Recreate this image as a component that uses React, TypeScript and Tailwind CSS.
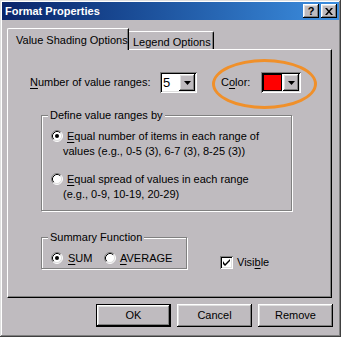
import React from "react";

const raised =
  "shadow-[inset_-1px_-1px_0_#000000,inset_1px_1px_0_#ffffff,inset_-2px_-2px_0_#808080,inset_2px_2px_0_#dfdfdf]";
const sunken =
  "shadow-[inset_1px_1px_0_#808080,inset_-1px_-1px_0_#ffffff,inset_2px_2px_0_#000000,inset_-2px_-2px_0_#dfdfdf]";

function U({ children }: { children: React.ReactNode }) {
  return <span className="underline underline-offset-[2px] decoration-1">{children}</span>;
}

function DropButton() {
  return (
    <div className={`w-[16px] h-full bg-[#bfbbbf] flex items-center justify-center ${raised}`}>
      <svg width="7" height="4" viewBox="0 0 7 4">
        <path d="M0 0 H7 L3.5 4 Z" fill="#000" />
      </svg>
    </div>
  );
}

function Radio({ checked }: { checked?: boolean }) {
  return (
    <svg width="12" height="12" viewBox="0 0 12 12" className="shrink-0">
      <circle cx="6" cy="6" r="5" fill="#fff" />
      <path d="M2.11 9.89 A5.5 5.5 0 0 1 9.89 2.11" stroke="#808080" fill="none" />
      <path d="M9.89 2.11 A5.5 5.5 0 0 1 2.11 9.89" stroke="#ffffff" fill="none" />
      <path d="M2.82 9.18 A4.5 4.5 0 0 1 9.18 2.82" stroke="#000000" fill="none" />
      <path d="M9.18 2.82 A4.5 4.5 0 0 1 2.82 9.18" stroke="#dfdfdf" fill="none" />
      {checked && <circle cx="6" cy="6" r="2" fill="#000" />}
    </svg>
  );
}

function Group({ label, className, children }: { label: string; className: string; children: React.ReactNode }) {
  return (
    <div
      className={`relative border border-[#808080] shadow-[1px_1px_0_#ffffff,inset_1px_1px_0_#ffffff] ${className}`}
    >
      <span className="absolute -top-[8px] left-[6px] bg-[#bfbbbf] px-[2px] leading-[14px]">{label}</span>
      {children}
    </div>
  );
}

function Btn({ label, def }: { label: string; def?: boolean }) {
  return (
    <div className={`w-[75px] h-[23px] ${def ? "border border-black" : ""}`}>
      <div className={`w-full h-full flex items-center justify-center ${raised}`}>{label}</div>
    </div>
  );
}

export default function App() {
  return (
    <div className="w-[341px] h-[337px] bg-[#bfbbbf] text-black text-[11px] font-['Liberation_Sans',Arial,sans-serif] shadow-[inset_-1px_-1px_0_#404040,inset_1px_1px_0_#dfdfdf,inset_-2px_-2px_0_#808080,inset_2px_2px_0_#ffffff] p-[2px] flex flex-col overflow-hidden select-none">
      {/* title bar */}
      <div className="h-[18px] bg-gradient-to-r from-[#0a246a] to-[#3d8fe0] flex items-center pl-[3px] pr-[2px]">
        <span className="text-white font-bold text-[11px] flex-1">Format Properties</span>
        <div className={`w-[16px] h-[14px] bg-[#bfbbbf] flex items-center justify-center font-bold text-[11px] leading-none ${raised}`}>
          ?
        </div>
        <div className={`ml-[2px] w-[16px] h-[14px] bg-[#bfbbbf] flex items-center justify-center ${raised}`}>
          <svg width="8" height="7" viewBox="0 0 8 7">
            <path d="M0 0 L2 0 L4 2.5 L6 0 L8 0 L5 3.5 L8 7 L6 7 L4 4.5 L2 7 L0 7 L3 3.5 Z" fill="#000" />
          </svg>
        </div>
      </div>

      <div className="flex flex-col pl-[5px] pr-[7px] pt-[8px]">
        {/* tabs */}
        <div className="flex items-end h-[21px] relative z-10">
          <div className="w-[122px] border-l border-t border-white rounded-tl-[2px] shadow-[inset_-1px_0_0_#808080] border-r border-r-black bg-[#bfbbbf] flex items-start pt-[3px] pl-[8px] -mb-[1px] h-[22px]">
            Value Shading Options
          </div>
          <div className="w-[85px] h-[18px] border-t border-white rounded-tr-[2px] border-r border-r-black shadow-[inset_-1px_0_0_#808080] flex items-start pt-[2px] pl-[4px]">
            Legend Options
          </div>
        </div>

        {/* panel */}
        <div className="relative h-[249px] border-l border-t border-white border-r border-b border-r-black border-b-black shadow-[inset_-1px_-1px_0_#808080] flex flex-col pl-[22px]">
          <div className="flex items-center mt-[22px] h-[21px]">
            <span className="w-[130px]">
              <U>N</U>umber of value ranges:
            </span>
            <div className={`w-[37px] h-[21px] bg-white flex p-[2px] ${sunken}`}>
              <span className="flex-1 pl-[1px] text-[13px] leading-[17px]">5</span>
              <DropButton />
            </div>
            <span className="ml-[24px] w-[40px]">
              C<U>o</U>lor:
            </span>
            <div className={`w-[40px] h-[21px] bg-white flex p-[2px] ${sunken}`}>
              <div className="flex-1 bg-[#ff0000] border border-black mr-[1px]" />
              <DropButton />
            </div>
          </div>

          <Group label="Define value ranges by" className="ml-[11px] mt-[22px] w-[251px] h-[96px] pl-[9px] pt-[13px]">
            <div className="flex items-start gap-[4px] leading-[15px]">
              <span className="mt-[1px]">
                <Radio checked />
              </span>
              <span>
                <U>E</U>qual number of items in each range of
                <br />
                <span className="-ml-[4px]">values (e.g., 0-5 (3), 6-7 (3), 8-25 (3))</span>
              </span>
            </div>
            <div className="flex items-start gap-[4px] leading-[15px] mt-[13px]">
              <span className="mt-[1px]">
                <Radio />
              </span>
              <span>
                <U>E</U>qual spread of values in each range
                <br />
                <span className="-ml-[4px]">(e.g., 0-9, 10-19, 20-29)</span>
              </span>
            </div>
          </Group>

          <div className="flex items-start mt-[26px]">
            <Group label="Summary Function" className="ml-[11px] w-[146px] h-[32px] pl-[9px] pt-[12px]">
              <div className="flex items-center">
                <Radio checked />
                <span className="ml-[5px] w-[36px]">
                  <U>S</U>UM
                </span>
                <Radio />
                <span className="ml-[4px]">
                  <U>A</U>VERAGE
                </span>
              </div>
            </Group>
            <div className="flex items-center ml-[33px] mt-[17px]">
              <div className={`w-[13px] h-[13px] bg-white flex items-center justify-center ${sunken}`}>
                <svg width="7" height="7" viewBox="0 0 7 7">
                  <path d="M0 2 L0 5 L2 7 L7 2 L7 0 L2 5 Z" fill="#000" />
                </svg>
              </div>
              <span className="ml-[4px]">
                Visi<U>b</U>le
              </span>
            </div>
          </div>

          {/* highlight ellipse */}
          <div className="absolute left-[204px] top-[9px] w-[105px] h-[50px] rounded-[50%] border-[3px] border-[#f0902a] pointer-events-none" />
        </div>

        {/* buttons */}
        <div className="flex justify-end gap-[6px] mt-[6px] -mr-[1px]">
          <Btn label="OK" def />
          <Btn label="Cancel" />
          <Btn label="Remove" />
        </div>
      </div>
    </div>
  );
}
